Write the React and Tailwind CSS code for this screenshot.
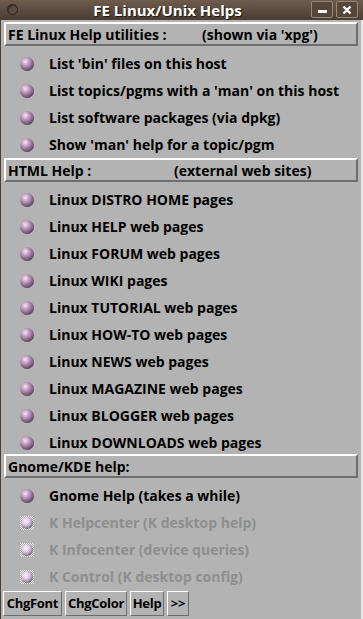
import React from "react";

const font = { fontFamily: '"Open Sans", "Noto Sans", sans-serif' };

function Bullet({ disabled }) {
  return (
    <svg width="16" height="16" viewBox="0 0 16 16" className="shrink-0">
      <defs>
        <radialGradient id="sph" cx="0.38" cy="0.32" r="0.72">
          <stop offset="0" stopColor="#f6e8f6" />
          <stop offset="0.35" stopColor="#c4a2c4" />
          <stop offset="0.8" stopColor="#7a5c7a" />
          <stop offset="1" stopColor="#4e3a4e" />
        </radialGradient>
        <radialGradient id="sphd" cx="0.4" cy="0.35" r="0.7">
          <stop offset="0" stopColor="#ffffff" />
          <stop offset="0.45" stopColor="#e0c8ec" />
          <stop offset="1" stopColor="#5a4460" />
        </radialGradient>
        <pattern id="chk" width="2" height="2" patternUnits="userSpaceOnUse">
          <rect width="2" height="2" fill="#a8a8a8" />
          <rect width="1" height="1" fill="#ececec" />
          <rect x="1" y="1" width="1" height="1" fill="#ececec" />
        </pattern>
      </defs>
      {disabled ? (
        <>
          <rect x="1" y="1" width="14" height="14" fill="url(#chk)" />
          <circle cx="8" cy="8" r="6" fill="url(#sphd)" opacity="0.8" />
        </>
      ) : (
        <circle cx="8" cy="8" r="7" fill="url(#sph)" />
      )}
    </svg>
  );
}

function Header({ left, right, leftW }) {
  return (
    <div className="mx-[3px] flex h-[24px] items-center border-2 border-t-white border-l-white border-b-[#6e6e6e] border-r-[#6e6e6e] bg-[#b3b3b3] pl-[2px] text-[14px] font-bold text-black">
      <span className="shrink-0 whitespace-pre" style={leftW ? { width: leftW } : undefined}>{left}</span>
      {right && <span className="whitespace-pre">{right}</span>}
    </div>
  );
}

function Item({ children, disabled }) {
  return (
    <div className="flex h-[27px] items-center pl-[18px]">
      <Bullet disabled={disabled} />
      <span className={`ml-[14px] whitespace-pre text-[14px] font-bold ${disabled ? "text-[#8e8e8e]" : "text-black"}`}>
        {children}
      </span>
    </div>
  );
}

function Btn({ children, w }) {
  return (
    <div
      className="flex h-[25px] items-center justify-center border border-t-white border-l-white border-b-[#6e6e6e] border-r-[#6e6e6e] bg-[#b3b3b3] text-[13px] font-bold tracking-[-0.3px] text-black"
      style={{ width: w }}
    >
      {children}
    </div>
  );
}

export default function App() {
  return (
    <div style={font} className="flex h-[619px] w-[363px] flex-col overflow-hidden bg-[#b3b3b3]">
      <div className="relative flex h-[20px] shrink-0 items-center bg-gradient-to-b from-[#6e5c4d] to-[#4a3c32]">
        <div className="absolute left-[7px] top-[4px] h-[11px] w-[11px] rounded-full border border-[#2e241d] bg-[#5e4e42] shadow-[inset_1px_1px_1px_#3a2e25]" />
        <div className="ml-[24px] flex w-[287px] justify-center">
          <span className="text-[15px] font-bold leading-[20px] text-white [text-shadow:1px_1px_1px_#1e1610]">FE Linux/Unix Helps</span>
        </div>
        <div className="absolute left-[311px] top-[1px] flex h-[17px] w-[22px] items-end justify-center rounded-[2px] border border-[#9a8878] bg-[#564639] pb-[4px]">
          <div className="h-[3px] w-[9px] bg-white" />
        </div>
        <div className="absolute left-[336px] top-[1px] flex h-[17px] w-[22px] items-center justify-center rounded-[2px] border border-[#9a8878] bg-[#564639]">
          <svg width="10" height="10" viewBox="0 0 10 10">
            <path d="M1.5 1.5 L8.5 8.5 M8.5 1.5 L1.5 8.5" stroke="white" strokeWidth="2.4" />
          </svg>
        </div>
      </div>
      <div className="flex flex-1 flex-col border-l border-r-2 border-l-[#4a3c32] border-r-[#e8e8e8] pt-[2px]">
        <Header left="FE Linux Help utilities :" right="(shown via 'xpg')" leftW="194px" />
        <div className="pt-[4px]">
          <Item>List 'bin' files on this host</Item>
          <Item>List topics/pgms with a 'man' on this host</Item>
          <Item>List software packages (via dpkg)</Item>
          <Item>Show 'man' help for a topic/pgm</Item>
        </div>
        <Header left="HTML Help :" right="(external web sites)" leftW="166px" />
        <div className="pt-[4px]">
          <Item>Linux DISTRO HOME pages</Item>
          <Item>Linux HELP web pages</Item>
          <Item>Linux FORUM web pages</Item>
          <Item>Linux WIKI pages</Item>
          <Item>Linux TUTORIAL web pages</Item>
          <Item>Linux HOW-TO web pages</Item>
          <Item>Linux NEWS web pages</Item>
          <Item>Linux MAGAZINE web pages</Item>
          <Item>Linux BLOGGER web pages</Item>
          <Item>Linux DOWNLOADS web pages</Item>
        </div>
        <div className="-mt-[2px]">
          <Header left="Gnome/KDE help:" />
        </div>
        <div className="pt-[4px]">
          <Item>Gnome Help (takes a while)</Item>
          <Item disabled>K Helpcenter (K desktop help)</Item>
          <Item disabled>K Infocenter (device queries)</Item>
          <Item disabled>K Control (K desktop config)</Item>
        </div>
        <div className="ml-[2px] mt-[1px] flex gap-[3px]">
          <Btn w="59px">ChgFont</Btn>
          <Btn w="62px">ChgColor</Btn>
          <Btn w="34px">Help</Btn>
          <Btn w="22px">&gt;&gt;</Btn>
        </div>
      </div>
    </div>
  );
}
